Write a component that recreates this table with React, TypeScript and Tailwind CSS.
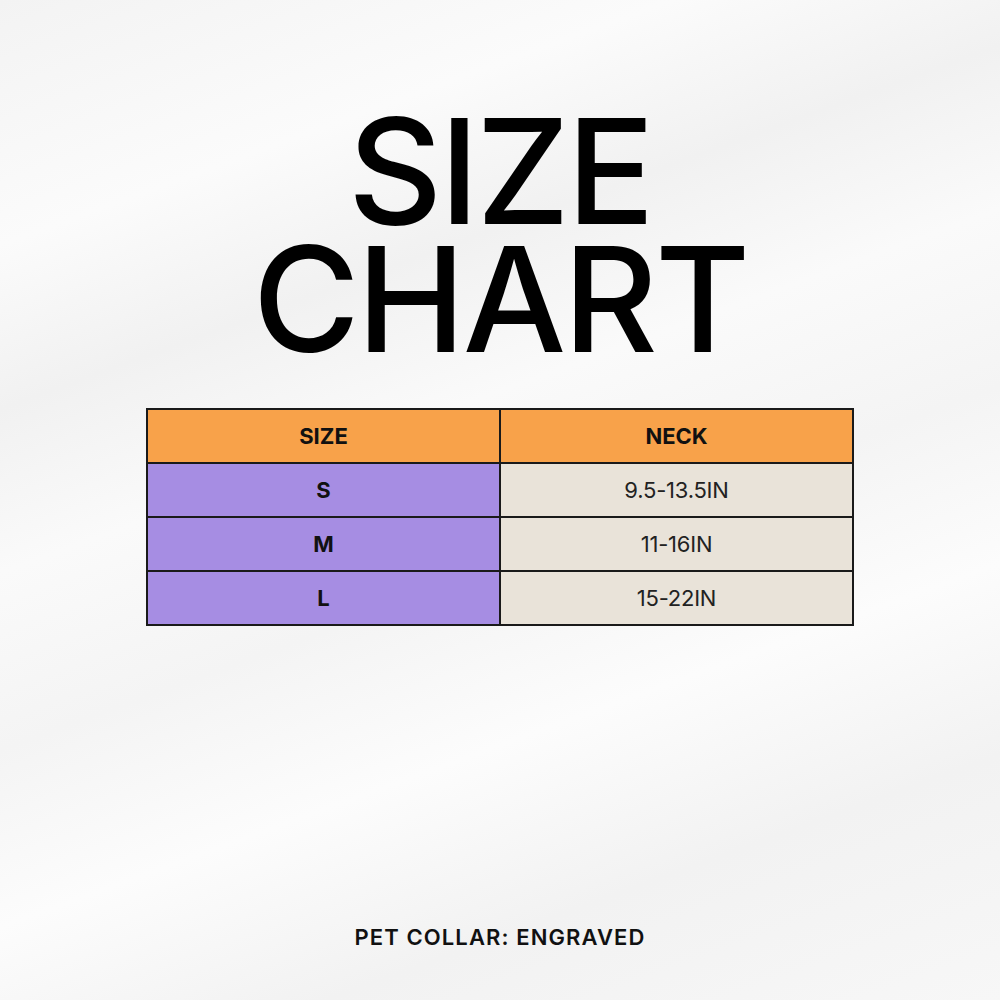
import React from "react";

const rows = [
  { size: "S", neck: "9.5-13.5IN" },
  { size: "M", neck: "11-16IN" },
  { size: "L", neck: "15-22IN" },
];

export default function App() {
  return (
    <div
      className="w-[1000px] h-[1000px] overflow-hidden flex flex-col items-center bg-[linear-gradient(160deg,#f3f3f3_0%,#fbfbfb_18%,#f1f1f1_30%,#fafafa_42%,#f4f4f4_55%,#fcfcfc_68%,#f2f2f2_82%,#f7f7f7_100%)] text-black"
      style={{ fontFamily: "Inter, 'Liberation Sans', sans-serif" }}
    >
      <h1 className="mt-[107px] text-[146px] leading-[128px] font-medium text-center tracking-[-0.02em] text-black">
        <div>SIZE</div>
        <div>CHART</div>
      </h1>
      <table className="mt-[45px] w-[708px] border-collapse border-2 border-[#1a1a1a]">
        <thead>
          <tr className="h-[54px] bg-[#f8a24a]">
            <th className="w-1/2 border-2 border-[#1a1a1a] text-[22px] font-bold text-[#111]">SIZE</th>
            <th className="w-1/2 border-2 border-[#1a1a1a] text-[22px] font-bold text-[#111]">NECK</th>
          </tr>
        </thead>
        <tbody>
          {rows.map((r) => (
            <tr key={r.size} className="h-[54px]">
              <td className="border-2 border-[#1a1a1a] bg-[#a68de3] text-center text-[22px] font-bold text-[#111]">
                {r.size}
              </td>
              <td className="border-2 border-[#1a1a1a] bg-[#e9e3d9] text-center text-[22px] font-normal tracking-[-0.01em] text-[#222]">
                {r.neck}
              </td>
            </tr>
          ))}
        </tbody>
      </table>
      <div className="mt-[296px] text-[22px] leading-[30px] font-semibold tracking-[0.05em] text-[#111]">
        PET COLLAR: ENGRAVED
      </div>
    </div>
  );
}
